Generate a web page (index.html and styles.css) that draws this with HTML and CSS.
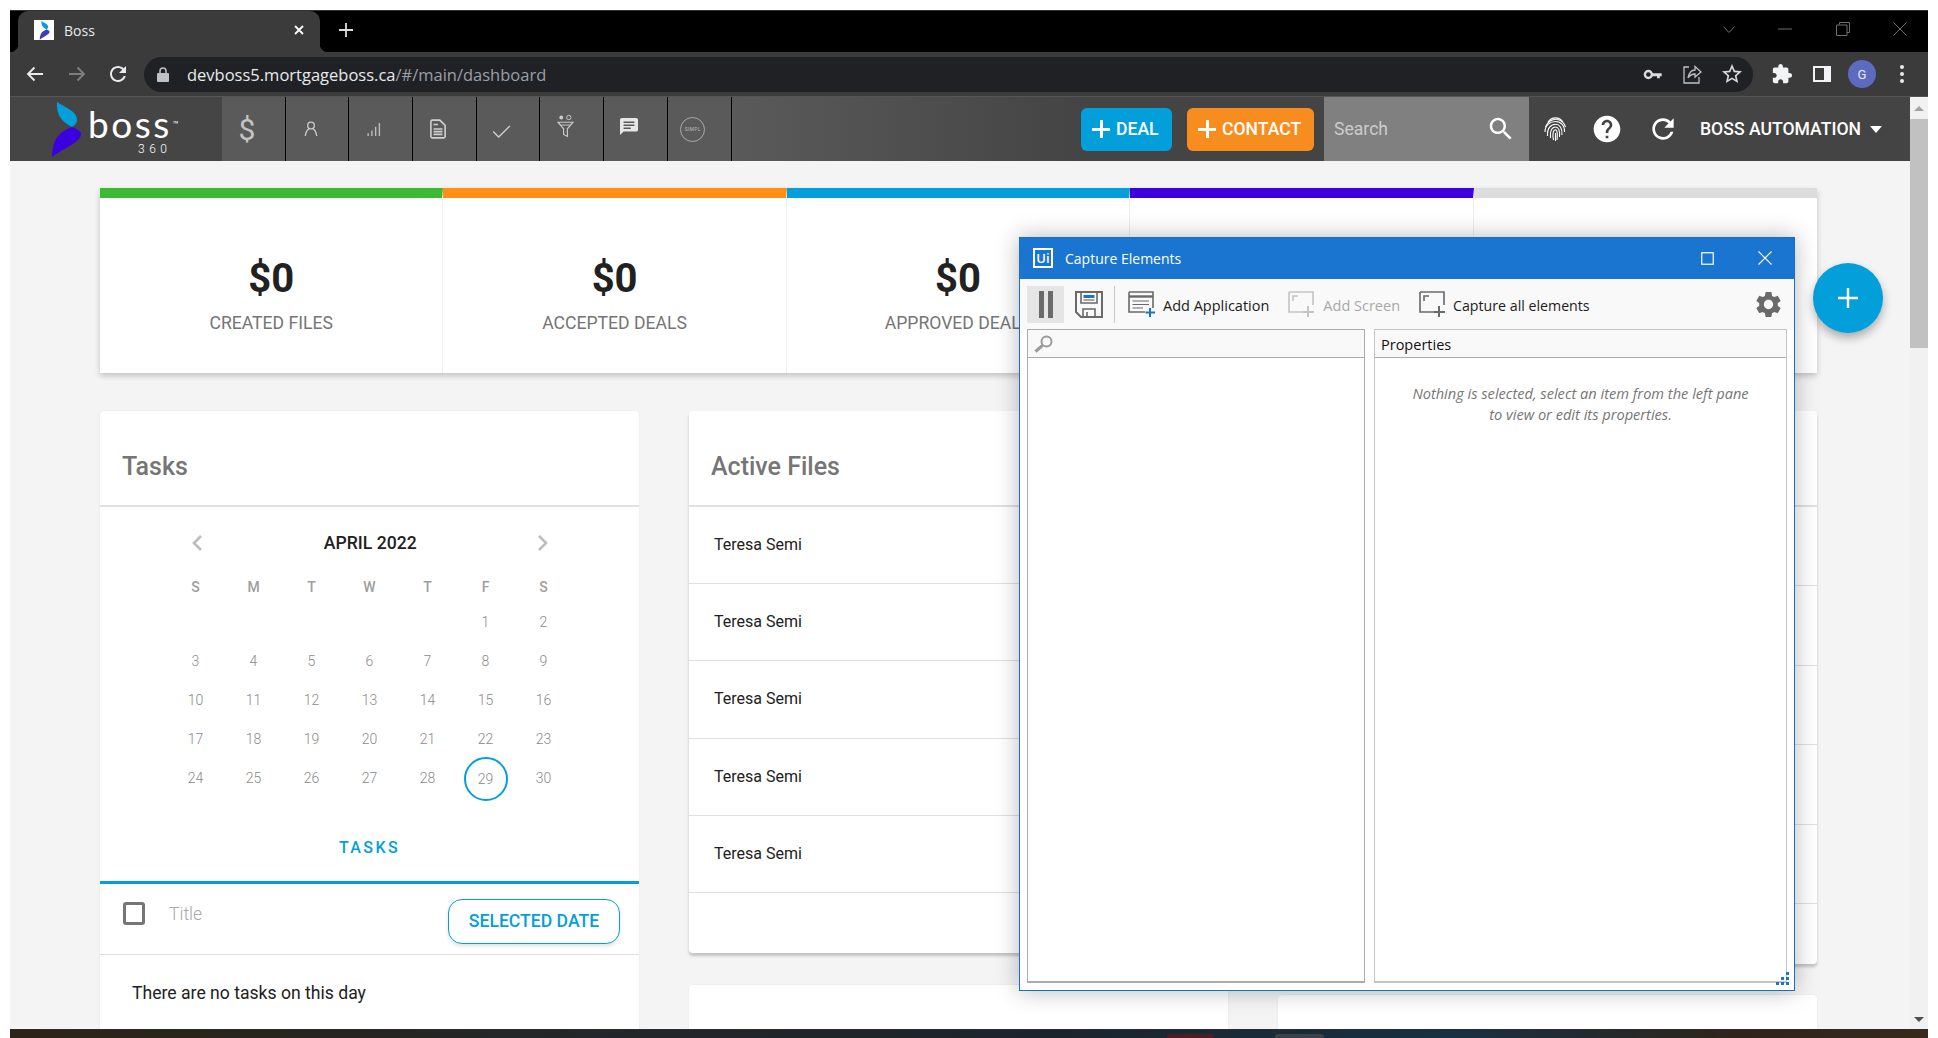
FILE: index.html
```html
<!DOCTYPE html>
<html>
<head>
    <meta charset="UTF-8">
    <meta name="viewport" content="width=device-width, initial-scale=1.0">
    <title>Boss</title>
    <link rel="stylesheet" href="styles.css">
</head>
<body>
<div class="frame">

    <!-- browser chrome -->
    <div class="tabstrip">
        <div class="tab">
            <span class="favicon">
                <svg viewBox="0 0 32 56" width="11" height="19">
                    <path fill="#039fdb" d="M7 0C16 6 27 9 27 18C27 21 25 23 22 25C15 21 6 16 7 0Z"/>
                    <path fill="#3f3fb0" d="M22 25C27 27 31 29 31 32C31 40 14 46 2 55C3 42 4 32 22 25Z"/>
                </svg>
            </span>
            <span class="tab-title">Boss</span>
            <svg class="tab-close" viewBox="0 0 10 10" width="10" height="10"><path d="M1 1L9 9M9 1L1 9" stroke="#fff" stroke-width="1.8"/></svg>
        </div>
        <svg class="new-tab" viewBox="0 0 14 14" width="14" height="14"><path d="M7 0V14M0 7H14" stroke="#dadce0" stroke-width="1.8"/></svg>
        <div class="win-controls">
            <svg viewBox="0 0 12 7" width="12" height="7"><path d="M0.5 0.5L6 6.5L11.5 0.5" fill="none" stroke="#6f6f6f"/></svg>
            <svg viewBox="0 0 14 2" width="14" height="2"><path d="M0 1H14" stroke="#6f6f6f"/></svg>
            <svg viewBox="0 0 14 14" width="14" height="14"><path d="M3.5 2.5V0.5H13.5V10.5H11M0.5 3H11V13.5H0.5Z" fill="none" stroke="#6f6f6f"/></svg>
            <svg viewBox="0 0 14 14" width="14" height="14"><path d="M0.5 0.5L13.5 13.5M13.5 0.5L0.5 13.5" stroke="#6f6f6f"/></svg>
        </div>
    </div>

    <div class="toolbar">
        <span class="tb-btn">
            <svg viewBox="0 0 18 18" width="18" height="18"><path d="M17 9H2M8.5 2.5L2 9L8.5 15.5" fill="none" stroke="#e8eaed" stroke-width="1.9"/></svg>
        </span>
        <span class="tb-btn">
            <svg viewBox="0 0 18 18" width="18" height="18"><path d="M1 9H16M9.5 2.5L16 9L9.5 15.5" fill="none" stroke="#7c7e80" stroke-width="1.9"/></svg>
        </span>
        <span class="tb-btn tb-reload">
            <svg viewBox="0 0 24 24" width="24" height="24"><path fill="#e8eaed" d="M17.65 6.35C16.2 4.9 14.21 4 12 4c-4.42 0-7.99 3.58-7.99 8s3.57 8 7.99 8c3.73 0 6.84-2.55 7.73-6h-2.08c-.82 2.33-3.04 4-5.65 4-3.31 0-6-2.69-6-6s2.69-6 6-6c1.66 0 3.14.69 4.22 1.78L13 11h7V4l-2.35 2.35z"/></svg>
        </span>
        <div class="addressbar">
            <svg class="lock" viewBox="0 0 12 15" width="12" height="15"><path fill="#bdc1c6" d="M1 6h10a1 1 0 0 1 1 1v7a1 1 0 0 1-1 1H1a1 1 0 0 1-1-1V7a1 1 0 0 1 1-1z"/><path d="M3 6V4a3 3 0 0 1 6 0v2" fill="none" stroke="#bdc1c6" stroke-width="1.5"/></svg>
            <span class="url">devboss5.mortgageboss.ca<span class="url-path">/#/main/dashboard</span></span>
            <span class="tb-btn addr-first">
                <svg viewBox="0 0 20 12" width="19" height="11"><circle cx="5.5" cy="6" r="3.8" fill="none" stroke="#dadce0" stroke-width="2.6"/><path d="M9 4.5H20V8H18V10H15V8H9Z" fill="#dadce0"/></svg>
            </span>
            <span class="tb-btn">
                <svg viewBox="0 0 20 20" width="20" height="20"><path d="M7 3H2V19H17V13M6 14C7 9 10 6 13 6V2.5L19 8L13 13V10C10 10 8 11 6 14Z" fill="none" stroke="#bdc1c6" stroke-width="1.3"/></svg>
            </span>
            <span class="tb-btn">
                <svg viewBox="0 0 24 24" width="24" height="24"><path fill="#dadce0" d="M22 9.24l-7.19-.62L12 2 9.19 8.63 2 9.24l5.46 4.73L5.82 21 12 17.27 18.18 21l-1.63-7.03L22 9.24zM12 15.4l-3.76 2.27 1-4.28-3.32-2.88 4.38-.38L12 6.1l1.71 4.04 4.38.38-3.32 2.88 1 4.28L12 15.4z"/></svg>
            </span>
        </div>
        <span class="tb-btn tb-ext">
            <svg viewBox="0 0 24 24" width="22" height="22"><path fill="#f1f3f4" d="M20.5 11H19V7c0-1.1-.9-2-2-2h-4V3.5C13 2.12 11.88 1 10.5 1S8 2.12 8 3.5V5H4c-1.1 0-1.99.9-1.99 2v3.8H3.5c1.49 0 2.7 1.21 2.7 2.7s-1.21 2.7-2.7 2.7H2V20c0 1.1.9 2 2 2h3.8v-1.5c0-1.49 1.21-2.7 2.7-2.7 1.49 0 2.7 1.21 2.7 2.7V22H17c1.1 0 2-.9 2-2v-4h1.5c1.38 0 2.5-1.12 2.5-2.5S21.88 11 20.5 11z"/></svg>
        </span>
        <span class="tb-btn">
            <svg viewBox="0 0 18 16" width="18" height="16"><path fill-rule="evenodd" fill="#f1f3f4" d="M0 0H18V16H0ZM2 2V14H11V2Z"/></svg>
        </span>
        <span class="tb-btn"><span class="avatar">G</span></span>
        <span class="tb-btn tb-last">
            <svg viewBox="0 0 4 18" width="4" height="18"><circle cx="2" cy="2" r="2" fill="#e8eaed"/><circle cx="2" cy="9" r="2" fill="#e8eaed"/><circle cx="2" cy="16" r="2" fill="#e8eaed"/></svg>
        </span>
    </div>

    <div class="viewport">
        <div class="app">

            <!-- app nav -->
            <div class="navbar">
                <div class="logo">
                    <svg viewBox="0 0 32 56" width="32" height="56">
                        <path fill="#039fdb" d="M7 0C16 6 27 9 27 18C27 21 25 23 22 25C15 21 6 16 7 0Z"/>
                        <path fill="#3b00e0" d="M22 25C27 27 31 29 31 32C31 40 14 46 2 55C3 42 4 32 22 25Z"/>
                    </svg>
                    <div class="logo-word">
                        <div class="logo-boss">boss<sup>™</sup></div>
                        <div class="logo-360">360</div>
                    </div>
                </div>
                <div class="nav-item"><span class="nav-dollar">$</span></div>
                <div class="nav-item">
                    <svg viewBox="0 0 16 18" width="14" height="16"><circle cx="8" cy="5" r="3.8" fill="none" stroke="#ccc" stroke-width="1.5"/><path d="M1.5 17C2 12 4 9.5 6 8.5M14.5 17C14 12 12 9.5 10 8.5" fill="none" stroke="#ccc" stroke-width="1.5"/></svg>
                </div>
                <div class="nav-item">
                    <svg viewBox="0 0 16 16" width="16" height="15"><path d="M1 12H2.5V15H1ZM5 9H6.5V15H5ZM9 5H10.5V15H9ZM13 1H14.5V15H13Z" fill="#bbb"/></svg>
                </div>
                <div class="nav-item">
                    <svg viewBox="0 0 18 22" width="16" height="20"><path fill="none" stroke="#d0d0d0" stroke-width="1.8" d="M1 2.5A1.5 1.5 0 0 1 2.5 1H11L17 7V19.5A1.5 1.5 0 0 1 15.5 21H2.5A1.5 1.5 0 0 1 1 19.5Z"/><path d="M4 6H9M4 11H14M4 14H14M4 17H14" stroke="#d0d0d0" stroke-width="1.8"/></svg>
                </div>
                <div class="nav-item nav-check">
                    <svg viewBox="0 0 20 14" width="19" height="13"><path d="M1 7L7 13L19 1" fill="none" stroke="#ccc" stroke-width="1.5"/></svg>
                </div>
                <div class="nav-item nav-up">
                    <svg viewBox="0 0 18 24" width="17" height="24"><circle cx="4.5" cy="3" r="2" fill="#ccc"/><circle cx="12.5" cy="3" r="2.3" fill="none" stroke="#ccc"/><path d="M1 8H17L11 15V23L7 21V15Z" fill="none" stroke="#ccc" stroke-width="1.2"/><path d="M4 11H14" stroke="#ccc"/></svg>
                </div>
                <div class="nav-item nav-up">
                    <svg viewBox="0 0 20 20" width="18" height="17" preserveAspectRatio="none"><path fill="#e6e6e6" d="M2 0H18A2 2 0 0 1 20 2V14A2 2 0 0 1 18 16H4L0 20V2A2 2 0 0 1 2 0Z"/><path d="M4 5H16M4 8.5H16M4 12H12" stroke="#585858" stroke-width="1.6"/></svg>
                </div>
                <div class="nav-item">
                    <span class="simpl">SIMPL</span>
                </div>

                <button class="nav-btn btn-deal"><span class="btn-plus"></span>DEAL</button>
                <button class="nav-btn btn-contact"><span class="btn-plus"></span>CONTACT</button>
                <div class="nav-search">
                    <span>Search</span>
                    <svg viewBox="0 0 24 24" width="30" height="30"><path fill="#fff" d="M15.5 14h-.79l-.28-.27C15.41 12.59 16 11.11 16 9.5 16 5.91 13.09 3 9.5 3S3 5.91 3 9.5 5.91 16 9.5 16c1.61 0 3.09-.59 4.23-1.57l.27.28v.79l5 4.99L20.49 19l-4.99-5zm-6 0C7.01 14 5 11.99 5 9.5S7.01 5 9.5 5 14 7.01 14 9.5 11.99 14 9.5 14z"/></svg>
                </div>
                <span class="nav-tool">
                    <svg viewBox="0 0 24 26" width="24" height="26" fill="none" stroke="#fff" stroke-width="1.1">
                        <path d="M5 6C9 0.5 16 0.5 20 6"/>
                        <path d="M2.5 11C5 5 10 3 13 3.2C17 3.5 21 6.5 22.5 11"/>
                        <path d="M2 16C2 9 7 5.5 12.5 5.5C18 5.5 22 10 21.5 16"/>
                        <path d="M4.5 20C4 12 8 8.3 12.5 8.3C16.5 8.3 19.5 12 19 19"/>
                        <path d="M7.5 22C6.5 15 9 11 12.5 11C15.5 11 17 14 16.5 21"/>
                        <path d="M10.5 24C9 18 10.5 13.8 12.5 13.8C14.5 13.8 14.5 19 14 24"/>
                        <path d="M12.5 17V25"/>
                    </svg>
                </span>
                <span class="nav-tool">
                    <svg viewBox="0 0 24 24" width="32" height="32"><path fill="#fff" d="M12 2C6.48 2 2 6.48 2 12s4.48 10 10 10 10-4.48 10-10S17.52 2 12 2zm1 17h-2v-2h2v2zm2.07-7.75l-.9.92C13.45 12.9 13 13.5 13 15h-2v-.5c0-1.1.45-2.1 1.17-2.83l1.24-1.26c.37-.36.59-.86.59-1.41 0-1.1-.9-2-2-2s-2 .9-2 2H8c0-2.21 1.79-4 4-4s4 1.79 4 4c0 .88-.36 1.68-.93 2.25z"/></svg>
                </span>
                <span class="nav-tool nav-tool-wide">
                    <svg viewBox="0 0 24 24" width="32" height="32"><path fill="#fff" d="M17.65 6.35C16.2 4.9 14.21 4 12 4c-4.42 0-7.99 3.58-7.99 8s3.57 8 7.99 8c3.73 0 6.84-2.55 7.73-6h-2.08c-.82 2.33-3.04 4-5.65 4-3.31 0-6-2.69-6-6s2.69-6 6-6c1.66 0 3.14.69 4.22 1.78L13 11h7V4l-2.35 2.35z"/></svg>
                </span>
                <span class="nav-user">BOSS AUTOMATION</span>
                <span class="nav-caret"></span>
            </div>

            <!-- dashboard -->
            <div class="content">
                <div class="stats">
                    <div class="stat stat-green"><div class="stat-value">$0</div><div class="stat-label">CREATED FILES</div></div>
                    <div class="stat stat-orange"><div class="stat-value">$0</div><div class="stat-label">ACCEPTED DEALS</div></div>
                    <div class="stat stat-blue"><div class="stat-value">$0</div><div class="stat-label">APPROVED DEALS</div></div>
                    <div class="stat stat-purple"></div>
                    <div class="stat stat-grey"></div>
                </div>

                <div class="columns">
                    <div class="column">
                        <div class="card card-tasks">
                            <h3 class="card-title">Tasks</h3>
                            <div class="cal-head">
                                <svg viewBox="0 0 10 16" width="10" height="16"><path d="M9 1L2 8L9 15" fill="none" stroke="#bdbdbd" stroke-width="2.6"/></svg>
                                <span class="cal-month">APRIL 2022</span>
                                <svg viewBox="0 0 10 16" width="10" height="16"><path d="M1 1L8 8L1 15" fill="none" stroke="#bdbdbd" stroke-width="2.6"/></svg>
                            </div>
                            <div class="cal-week">
                                <span>S</span><span>M</span><span>T</span><span>W</span><span>T</span><span>F</span><span>S</span>
                            </div>
                            <div class="cal-days">
                                <span></span><span></span><span></span><span></span><span></span><span>1</span><span>2</span>
                                <span>3</span><span>4</span><span>5</span><span>6</span><span>7</span><span>8</span><span>9</span>
                                <span>10</span><span>11</span><span>12</span><span>13</span><span>14</span><span>15</span><span>16</span>
                                <span>17</span><span>18</span><span>19</span><span>20</span><span>21</span><span>22</span><span>23</span>
                                <span>24</span><span>25</span><span>26</span><span>27</span><span>28</span><span class="cal-today">29</span><span>30</span>
                            </div>
                            <div class="tasks-tab">TASKS</div>
                            <div class="task-row">
                                <span class="checkbox"></span>
                                <span class="task-title">Title</span>
                                <button class="btn-date">SELECTED DATE</button>
                            </div>
                            <p class="task-empty">There are no tasks on this day</p>
                        </div>
                    </div>

                    <div class="column">
                        <div class="card card-files">
                            <h3 class="card-title">Active Files</h3>
                            <div class="file-row">Teresa Semi</div>
                            <div class="file-row">Teresa Semi</div>
                            <div class="file-row">Teresa Semi</div>
                            <div class="file-row">Teresa Semi</div>
                            <div class="file-row">Teresa Semi</div>
                        </div>
                        <div class="card card-next"></div>
                    </div>

                    <div class="column">
                        <div class="card card-side">
                            <div class="card-title card-title-blank"></div>
                            <div class="side-row"></div>
                            <div class="side-row"></div>
                            <div class="side-row"></div>
                            <div class="side-row"></div>
                            <div class="side-row"></div>
                        </div>
                        <div class="card card-next card-next-side"></div>
                    </div>
                </div>
            </div>
        </div>

        <div class="scrollbar">
            <span class="sb-up"></span>
            <span class="sb-thumb"></span>
            <span class="sb-down"></span>
        </div>
    </div>

    <div class="taskbar">
        <span class="tb-red"></span>
        <span class="tb-grey"></span>
    </div>

    <!-- floating things -->
    <div class="fab">
        <svg viewBox="0 0 20 20" width="20" height="20"><path d="M10 0V20M0 10H20" stroke="#fff" stroke-width="2.4"/></svg>
    </div>

    <div class="capture">
        <div class="capture-title">
            <span class="ui-logo">Ui</span>
            <span class="capture-name">Capture Elements</span>
            <svg class="cap-max" viewBox="0 0 13 13" width="13" height="13"><rect x="0.75" y="0.75" width="11.5" height="11.5" fill="none" stroke="#fff" stroke-width="1.2"/></svg>
            <svg class="cap-close" viewBox="0 0 14 14" width="14" height="14"><path d="M0.5 0.5L13.5 13.5M13.5 0.5L0.5 13.5" stroke="#fff" stroke-width="1.1"/></svg>
        </div>
        <div class="capture-tools">
            <span class="tool-pause"><i></i><i></i></span>
            <svg class="tool-save" viewBox="0 0 28 27" width="28" height="27">
                <path d="M1 1H27V26H6L1 21Z" fill="none" stroke="#6a6a6a" stroke-width="2"/>
                <path d="M6 1V12H22V1" fill="none" stroke="#6a6a6a" stroke-width="1.6"/>
                <path d="M8.5 4H19.5V7H8.5Z" fill="#1a75d0"/>
                <path d="M8.5 9H19.5" stroke="#6a6a6a" stroke-width="1.2"/>
                <path d="M8 26V18H20V26M12 21V26" fill="none" stroke="#6a6a6a" stroke-width="1.6"/>
            </svg>
            <span class="tool-sep"></span>
            <span class="tool-btn tool-app">
                <svg viewBox="0 0 27 26" width="27" height="26">
                    <path d="M1 1H25V17M17 21H1V1" fill="none" stroke="#6a6a6a" stroke-width="1.6"/>
                    <path d="M1 5.5H25" stroke="#6a6a6a" stroke-width="2.4"/>
                    <path d="M4.5 10H21M4.5 13.5H21M4.5 17H15" stroke="#6a6a6a" stroke-width="1.2"/>
                    <path d="M22 17V26M17.5 21.5H27" stroke="#1a75d0" stroke-width="2"/>
                </svg>
                <span class="tool-label">Add Application</span>
            </span>
            <span class="tool-btn tool-screen tool-off">
                <svg viewBox="0 0 27 26" width="27" height="26">
                    <path d="M1 1H25V14M15 21H1V1" fill="none" stroke="#c4c4c4" stroke-width="1.6"/>
                    <path d="M5 10V5H10" fill="none" stroke="#c4c4c4" stroke-width="1.6"/>
                    <path d="M20 15V26M15 21H26" stroke="#c4c4c4" stroke-width="2"/>
                </svg>
                <span class="tool-label">Add Screen</span>
            </span>
            <span class="tool-btn tool-all">
                <svg viewBox="0 0 27 26" width="27" height="26">
                    <path d="M1 1H25V14M15 21H1V1" fill="none" stroke="#6a6a6a" stroke-width="1.6"/>
                    <path d="M5 10V5H10" fill="none" stroke="#6a6a6a" stroke-width="1.6"/>
                    <path d="M20 15V26M15 21H26" stroke="#6a6a6a" stroke-width="2"/>
                </svg>
                <span class="tool-label">Capture all elements</span>
            </span>
            <svg class="tool-gear" viewBox="0 0 24 24" width="31" height="31"><path fill="#6a6a6a" d="M19.14 12.94c.04-.3.06-.61.06-.94 0-.32-.02-.64-.07-.94l2.03-1.58c.18-.14.23-.41.12-.61l-1.92-3.32c-.12-.22-.37-.29-.59-.22l-2.39.96c-.5-.38-1.03-.7-1.62-.94l-.36-2.54c-.04-.24-.24-.41-.48-.41h-3.84c-.24 0-.43.17-.47.41l-.36 2.54c-.59.24-1.13.57-1.62.94l-2.39-.96c-.22-.08-.47 0-.59.22L2.74 8.87c-.12.21-.08.47.12.61l2.03 1.58c-.05.3-.09.63-.09.94s.02.64.07.94l-2.03 1.58c-.18.14-.23.41-.12.61l1.92 3.32c.12.22.37.29.59.22l2.39-.96c.5.38 1.03.7 1.62.94l.36 2.54c.05.24.24.41.48.41h3.84c.24 0 .44-.17.47-.41l.36-2.54c.59-.24 1.13-.56 1.62-.94l2.39.96c.22.08.47 0 .59-.22l1.92-3.32c.12-.22.07-.47-.12-.61l-2.01-1.58zM12 15.6c-1.98 0-3.6-1.62-3.6-3.6s1.62-3.6 3.6-3.6 3.6 1.62 3.6 3.6-1.62 3.6-3.6 3.6z"/></svg>
        </div>
        <div class="capture-panes">
            <div class="pane pane-left">
                <div class="pane-head">
                    <svg viewBox="0 0 20 18" width="20" height="18"><circle cx="12.5" cy="6.5" r="5" fill="none" stroke="#9a9a9a" stroke-width="2"/><path d="M8.5 10.5L1.5 16.5" stroke="#9a9a9a" stroke-width="3"/></svg>
                </div>
            </div>
            <div class="pane pane-right">
                <div class="pane-head pane-head-text">Properties</div>
                <p class="pane-note">Nothing is selected, select an item from the left pane<br>to view or edit its properties.</p>
            </div>
        </div>
        <svg class="cap-grip" viewBox="0 0 13 13" width="13" height="13"><path fill="#1a75d0" d="M10 0H13V3H10ZM5 5H8V8H5ZM10 5H13V8H10ZM0 10H3V13H0ZM5 10H8V13H5ZM10 10H13V13H10Z"/></svg>
    </div>
</div>
</body>
</html>
```

FILE: styles.css
```css
* {
    box-sizing: border-box;
}

html, body {
    margin: 0;
    padding: 0;
    height: 100%;
    overflow: hidden;
    background-color: #fff;
}

body {
    padding: 10px 10px 0 10px;
    font-family: Roboto, sans-serif;
}

.frame {
    position: relative;
    width: 1918px;
    height: 1028px;
    display: flex;
    flex-direction: column;
    overflow: hidden;
}

/* browser chrome */
.tabstrip {
    flex: 0 0 42px;
    display: flex;
    align-items: center;
    background-color: #000;
    border-top: 1px solid #333;
}

.tab {
    position: relative;
    width: 302px;
    height: 41px;
    margin-left: 8px;
    display: flex;
    align-items: center;
    padding: 0 0 3px 16px;
    background-color: #3b3b3b;
    border-radius: 10px 10px 0 0;
    align-self: flex-end;
}

.tab::before,
.tab::after {
    content: "";
    position: absolute;
    bottom: 0;
    width: 8px;
    height: 8px;
}

.tab::before {
    left: -8px;
    background: radial-gradient(circle at 0 0, #000 8px, #3b3b3b 8.5px);
}

.tab::after {
    right: -8px;
    background: radial-gradient(circle at 100% 0, #000 8px, #3b3b3b 8.5px);
}

.favicon {
    width: 20px;
    height: 20px;
    display: flex;
    align-items: center;
    justify-content: center;
    background-color: #fff;
}

.tab-title {
    margin-left: 10px;
    font-family: "Open Sans", sans-serif;
    font-size: 14px;
    color: #e8eaed;
}

.tab-close {
    margin-left: auto;
    margin-right: 16px;
}

.new-tab {
    margin: 0 0 3px 19px;
}

.win-controls {
    display: flex;
    align-items: center;
    width: 184px;
    justify-content: space-between;
    margin: 0 21px 5px auto;
}

.toolbar {
    flex: 0 0 45px;
    display: flex;
    align-items: center;
    padding-left: 4px;
    background-color: #3b3b3b;
    border-bottom: 1px solid #555;
}

.tb-btn {
    flex: 0 0 40px;
    width: 40px;
    height: 35px;
    display: flex;
    align-items: center;
    justify-content: center;
}

.tb-btn:nth-child(1),
.tb-btn:nth-child(2) {
    flex-basis: 42px;
}

.addressbar {
    width: 1609px;
    height: 35px;
    margin-left: 6px;
    display: flex;
    align-items: center;
    padding-left: 13px;
    padding-right: 1px;
    background-color: #202124;
    border-radius: 18px;
}

.lock {
    flex: none;
}

.url {
    margin-left: 18px;
    font-family: "Open Sans", sans-serif;
    font-size: 16.5px;
    color: #e8eaed;
}

.url-path {
    color: #9aa0a6;
}

.addr-first {
    margin-left: auto;
}

.tb-ext {
    margin-left: 9px;
}

.avatar {
    width: 28px;
    height: 28px;
    border-radius: 50%;
    background-color: #5c6bc0;
    color: #e8eaed;
    font-size: 13px;
    display: flex;
    align-items: center;
    justify-content: center;
}

/* page */
.viewport {
    flex: 0 0 932px;
    display: flex;
    min-height: 0;
}

.app {
    flex: 1;
    min-width: 0;
    display: flex;
    flex-direction: column;
    background-color: #f4f4f4;
}

.navbar {
    flex: 0 0 64px;
    display: flex;
    align-items: center;
    padding-right: 28px;
    background: linear-gradient(90deg, #454545 0, #454545 212px, #5a5a5a 720px, #444 1075px);
}

.logo {
    width: 212px;
    height: 64px;
    display: flex;
    align-items: flex-start;
    padding: 5px 0 0 40px;
    flex: none;
    background-color: #454545;
}

.logo-word {
    margin: 3px 0 0 6px;
    color: #fff;
    width: 92px;
}

.logo-boss {
    font-family: Lato, sans-serif;
    font-size: 37px;
    line-height: 37px;
    letter-spacing: 2.5px;
    white-space: nowrap;
}

.logo-boss sup {
    font-family: Roboto, sans-serif;
    font-size: 10px;
    line-height: 6px;
    letter-spacing: 0;
    vertical-align: 10px;
    margin-left: 1px;
}

.logo-360 {
    font-size: 12px;
    font-weight: 300;
    line-height: 14px;
    letter-spacing: 4.5px;
    padding-left: 50px;
}

.nav-item {
    flex: 0 0 63.7px;
    height: 64px;
    display: flex;
    align-items: center;
    justify-content: center;
    padding-right: 13px;
    background-color: #5a5a5a;
    border-right: 1px solid #000;
}

.nav-up svg {
    margin-bottom: 6px;
}

.nav-check svg {
    margin-top: 4px;
}

.nav-dollar {
    font-size: 30px;
    color: #c4c4c4;
}

.simpl {
    flex: none;
    width: 25px;
    height: 25px;
    display: flex;
    align-items: center;
    justify-content: center;
    border: 1px solid #aaa;
    border-radius: 50%;
    font-size: 5px;
    letter-spacing: .3px;
    color: #bbb;
}

.nav-btn {
    height: 43px;
    display: flex;
    align-items: center;
    padding: 0 0 0 11px;
    border: none;
    border-radius: 6px;
    color: #fff;
    font-family: Roboto, sans-serif;
    font-size: 17.6px;
    font-weight: 500;
}

.btn-plus {
    width: 18px;
    height: 18px;
    margin-right: 6px;
    background:
        linear-gradient(#fff, #fff) center / 100% 3px no-repeat,
        linear-gradient(#fff, #fff) center / 3px 100% no-repeat;
}

.btn-deal {
    width: 91px;
    margin-left: auto;
    background-color: #039fdb;
}

.btn-contact {
    width: 127px;
    margin-left: 15px;
    background-color: #f78d1e;
}

.nav-search {
    width: 205px;
    height: 64px;
    margin-left: 10px;
    display: flex;
    align-items: center;
    justify-content: space-between;
    padding: 0 13px 0 10px;
    background-color: #808080;
    color: #ccc;
    font-size: 17.6px;
}

.nav-tool {
    flex: 0 0 52px;
    display: flex;
    align-items: center;
    justify-content: center;
}

.nav-tool-wide {
    flex-basis: 59px;
}

.nav-user {
    margin-left: 8px;
    font-size: 17.6px;
    font-weight: 500;
    color: #fff;
    white-space: nowrap;
}

.nav-caret {
    margin-left: 9px;
    border-left: 6px solid transparent;
    border-right: 6px solid transparent;
    border-top: 7px solid #fff;
}

.content {
    flex: 1;
    min-height: 0;
    overflow: hidden;
    padding: 27px 93px 0 90px;
}

.stats {
    display: grid;
    grid-template-columns: repeat(5, 1fr);
    height: 185px;
    background-color: #fff;
    box-shadow: 0 3px 6px rgba(0, 0, 0, 0.2);
}

.stat {
    display: flex;
    flex-direction: column;
    align-items: center;
    border-top: 10px solid #ddd;
    border-right: 1px solid #eee;
    padding-top: 57px;
}

.stat-green { border-top-color: #3dba33; }
.stat-orange { border-top-color: #ff9015; }
.stat-blue { border-top-color: #039fdb; }
.stat-purple { border-top-color: #3f00e0; }
.stat-grey { border-top-color: #dcdcdc; border-right: none; }

.stat-value {
    font-size: 40px;
    line-height: 48px;
    font-weight: 700;
    color: #212121;
}

.stat-label {
    margin-top: 9px;
    font-size: 17.6px;
    line-height: 22px;
    color: #757575;
}

.columns {
    display: grid;
    grid-template-columns: repeat(3, 1fr);
    column-gap: 50px;
    margin-top: 38px;
}

.card {
    background-color: #fff;
    border-radius: 4px;
    box-shadow: 0 0 2px rgba(0, 0, 0, 0.08);
}

.card-title {
    margin: 0;
    height: 96px;
    padding: 41px 0 0 22px;
    font-size: 25px;
    line-height: 30px;
    font-weight: 500;
    color: #757575;
    border-bottom: 2px solid #e0e0e0;
}

.card-tasks {
    height: 700px;
}

.cal-head {
    width: 358px;
    margin: 17px auto 9px;
    height: 38px;
    display: flex;
    align-items: center;
    justify-content: space-between;
    padding: 0 0 0 1.5px;
}

.cal-month {
    font-size: 17.6px;
    font-weight: 500;
    color: #212121;
}

.cal-week,
.cal-days {
    display: grid;
    grid-template-columns: repeat(7, 58px);
    justify-content: center;
    justify-items: center;
    align-items: center;
}

.cal-week {
    height: 32px;
    font-size: 14px;
    font-weight: 500;
    color: #9e9e9e;
}

.cal-days {
    grid-auto-rows: 38.8px;
    font-size: 14px;
    font-weight: 300;
    color: #8a8a8a;
}

.cal-today {
    width: 44px;
    height: 44px;
    margin-top: 2px;
    display: flex;
    align-items: center;
    justify-content: center;
    border: 2px solid #039fdb;
    border-radius: 50%;
}

.tasks-tab {
    height: 87px;
    padding-top: 41px;
    line-height: 20px;
    text-align: center;
    font-size: 16px;
    font-weight: 500;
    letter-spacing: 2.4px;
    color: #039fdb;
    border-bottom: 3px solid #039fdb;
}

.task-row {
    height: 71px;
    display: flex;
    align-items: flex-start;
    padding-left: 23px;
    border-bottom: 1px solid #e0e0e0;
}

.checkbox {
    width: 22px;
    height: 23px;
    margin-top: 18px;
    border: 3px solid #757575;
    border-radius: 3px;
}

.task-title {
    margin: 19px 0 0 24px;
    font-size: 17.6px;
    line-height: 22px;
    font-weight: 300;
    color: #a8a8a8;
}

.btn-date {
    width: 172px;
    height: 45px;
    margin: 15px 19px 0 auto;
    padding: 0;
    border: 1px solid #039fdb;
    border-radius: 14px;
    background-color: #fff;
    box-shadow: 0 2px 4px rgba(0, 0, 0, 0.12);
    color: #039fdb;
    font-family: Roboto, sans-serif;
    font-size: 17.6px;
    font-weight: 500;
}

.task-empty {
    margin: 0;
    padding: 28px 0 0 32px;
    font-size: 17.6px;
    line-height: 20px;
    color: #212121;
}

.card-files {
    height: 542px;
    box-shadow: 0 3px 3px rgba(0, 0, 0, 0.2);
}

.file-row {
    height: 77.2px;
    padding: 28px 0 0 25px;
    font-size: 16px;
    line-height: 20px;
    color: #212121;
    border-bottom: 1px solid #e0e0e0;
}

.card-side {
    height: 553px;
    box-shadow: 0 3px 3px rgba(0, 0, 0, 0.2);
}

.card-title-blank {
    padding: 0;
}

.side-row {
    height: 79.4px;
    border-bottom: 1px solid #e0e0e0;
}

.card-next {
    height: 300px;
    margin-top: 32px;
}

.card-next-side {
    margin-top: 31px;
}

.scrollbar {
    flex: 0 0 18px;
    display: flex;
    flex-direction: column;
    align-items: center;
    background-color: #f1f1f1;
}

.sb-up {
    margin-top: 9px;
    border-left: 5px solid transparent;
    border-right: 5px solid transparent;
    border-bottom: 5px solid #a3a3a3;
}

.sb-thumb {
    width: 100%;
    height: 229px;
    margin-top: 8px;
    background-color: #c1c1c1;
}

.sb-down {
    margin-top: auto;
    margin-bottom: 7px;
    border-left: 5px solid transparent;
    border-right: 5px solid transparent;
    border-top: 5px solid #505050;
}

.taskbar {
    flex: 0 0 9px;
    display: flex;
    align-items: flex-end;
    background: linear-gradient(90deg, #2c2416 0, #23262a 30%, #1c242b 55%, #173043 75%, #2f2419 90%, #37291c 100%);
    border-top: 1px solid #2b2b2b;
}

.tb-red {
    width: 47px;
    height: 4px;
    margin-left: 1157px;
    background-color: #4a1f22;
    border-radius: 3px 3px 0 0;
}

.tb-grey {
    width: 49px;
    height: 4px;
    margin-left: 61px;
    background-color: #3d4249;
    border-radius: 3px 3px 0 0;
}

/* floating */
.fab {
    position: absolute;
    left: 1803px;
    top: 253px;
    width: 70px;
    height: 70px;
    border-radius: 50%;
    display: flex;
    align-items: center;
    justify-content: center;
    background-color: #039fdb;
    box-shadow: 0 5px 10px rgba(0, 0, 0, 0.3);
}

.capture {
    position: absolute;
    left: 1009px;
    top: 227px;
    width: 776px;
    height: 754px;
    display: flex;
    flex-direction: column;
    background-color: #fff;
    border: 1px solid #1a6fc4;
    box-shadow: 0 0 22px rgba(0, 0, 0, 0.28);
    font-family: "Open Sans", sans-serif;
}

.capture-title {
    flex: 0 0 41px;
    display: flex;
    align-items: center;
    padding: 0 0 1px 13px;
    background-color: #1a75d0;
    color: #fff;
}

.ui-logo {
    width: 20px;
    height: 20px;
    border: 2px solid #fff;
    display: flex;
    align-items: center;
    justify-content: center;
    font-size: 13px;
    font-weight: 600;
    line-height: 1;
}

.capture-name {
    margin-left: 12px;
    font-size: 14px;
}

.cap-max {
    margin-left: auto;
}

.cap-close {
    margin: 0 22px 0 44px;
}

.capture-tools {
    flex: 0 0 50px;
    display: flex;
    align-items: center;
    padding: 0 10px 0 7px;
    background-color: #f9f9f9;
    font-size: 14.5px;
    color: #1c1c1c;
}

.tool-pause {
    width: 37px;
    height: 37px;
    display: flex;
    align-items: center;
    justify-content: center;
    gap: 4px;
    background-color: #e5e5e5;
}

.tool-pause i {
    width: 5px;
    height: 27px;
    background-color: #6a6a6a;
}

.tool-save {
    margin-left: 11px;
}

.tool-sep {
    width: 1px;
    height: 37px;
    margin: 0 13px 0 11px;
    background-color: #c8c8c8;
}

.tool-btn {
    display: flex;
    align-items: center;
    gap: 8px;
}

.tool-label {
    padding-top: 2px;
}

.tool-screen,
.tool-all {
    margin-left: 19px;
}

.tool-all {
    gap: 7px;
    font-size: 14.2px;
}

.tool-off {
    color: #a8a8a8;
}

.tool-gear {
    margin-left: auto;
}

.capture-panes {
    flex: 1;
    display: flex;
    gap: 9px;
    padding: 0 7px 7px 7px;
    min-height: 0;
}

.pane {
    display: flex;
    flex-direction: column;
    border: 1px solid #ababab;
    border-bottom-width: 2px;
}

.pane-left {
    width: 338px;
}

.pane-right {
    flex: 1;
    border-color: #c4c4c4;
}

.pane-head {
    flex: 0 0 28px;
    display: flex;
    align-items: center;
    padding-left: 6px;
    background-color: #f9f9f9;
    border-bottom: 1px solid #ababab;
    font-size: 14.5px;
    color: #111;
}

.pane-head-text {
    padding-top: 2px;
}

.pane-note {
    margin: 25px 0 0;
    text-align: center;
    font-style: italic;
    font-size: 14.6px;
    line-height: 21px;
    color: #767676;
}

.cap-grip {
    position: absolute;
    right: 5px;
    bottom: 5px;
}
```
